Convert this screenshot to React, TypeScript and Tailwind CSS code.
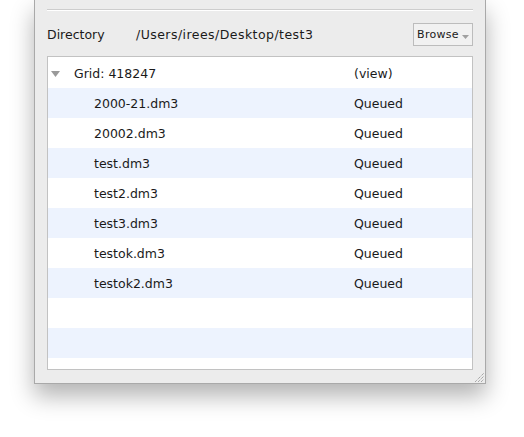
import React from 'react';

const files = [
  '2000-21.dm3',
  '20002.dm3',
  'test.dm3',
  'test2.dm3',
  'test3.dm3',
  'testok.dm3',
  'testok2.dm3',
];

const Row = ({ striped, children }: { striped: boolean; children?: React.ReactNode }) => (
  <div className={`flex h-[30px] items-center pt-[2px] ${striped ? 'bg-[#edf3fe]' : 'bg-white'}`}>{children}</div>
);

const App: React.FC = () => {
  return (
    <div className="h-[437px] w-[524px] bg-white font-['DejaVu_Sans',sans-serif] text-[12.5px] text-[#1a1a1a]">
      <div className="ml-[34px] w-[452px] border-x border-b border-[#a9a9a9] bg-[#ececec] shadow-[0_12px_22px_rgba(0,0,0,0.3)]">
        <div className="relative px-[12px] pb-[13px] pt-[9px]">
          <div className="border-t border-[#cdcdcd] border-b border-b-white" />

          <div className="mt-[12px] flex h-[23px] items-center pt-[2px]">
            <span className="w-[89px]">Directory</span>
            <span className="flex-1 tracking-[0.45px]">/Users/irees/Desktop/test3</span>
            <button className="-mt-[2px] flex h-[23px] w-[60px] items-center justify-center gap-[3px] border border-[#bcbcbc] bg-[#f1f1f1] pt-[1px] text-[11px] tracking-[0.3px]">
              Browse
              <svg width="7" height="5" viewBox="0 0 7 5" className="mt-[4px]">
                <path d="M0 0 L7 0 L3.5 4 Z" fill="#a0a0a0" />
              </svg>
            </button>
          </div>

          <div className="mt-[10px] h-[314px] overflow-hidden border border-[#c2c2c2] bg-white">
            <div className="pt-px">
              <Row striped={false}>
                <svg width="9" height="6" viewBox="0 0 9 6" className="ml-[3px] mr-[14px]">
                  <path d="M0 0 L9 0 L4.5 6 Z" fill="#9a9a9a" />
                </svg>
                <span className="w-[280px]">Grid: 418247</span>
                <span>(view)</span>
              </Row>
              {files.map((f, i) => (
                <Row key={f} striped={i % 2 === 0}>
                  <span className="ml-[46px] w-[260px]">{f}</span>
                  <span>Queued</span>
                </Row>
              ))}
              <Row striped={false} />
              <Row striped />
              <Row striped={false} />
            </div>
          </div>

          <svg width="10" height="10" viewBox="0 0 10 10" className="absolute bottom-[1px] right-[1px]">
            <path d="M1 10 L10 1 M4 10 L10 4 M7 10 L10 7" stroke="#8a8a8a" strokeWidth="1" strokeDasharray="1 1" />
          </svg>
        </div>
      </div>
    </div>
  );
};

export default App;
